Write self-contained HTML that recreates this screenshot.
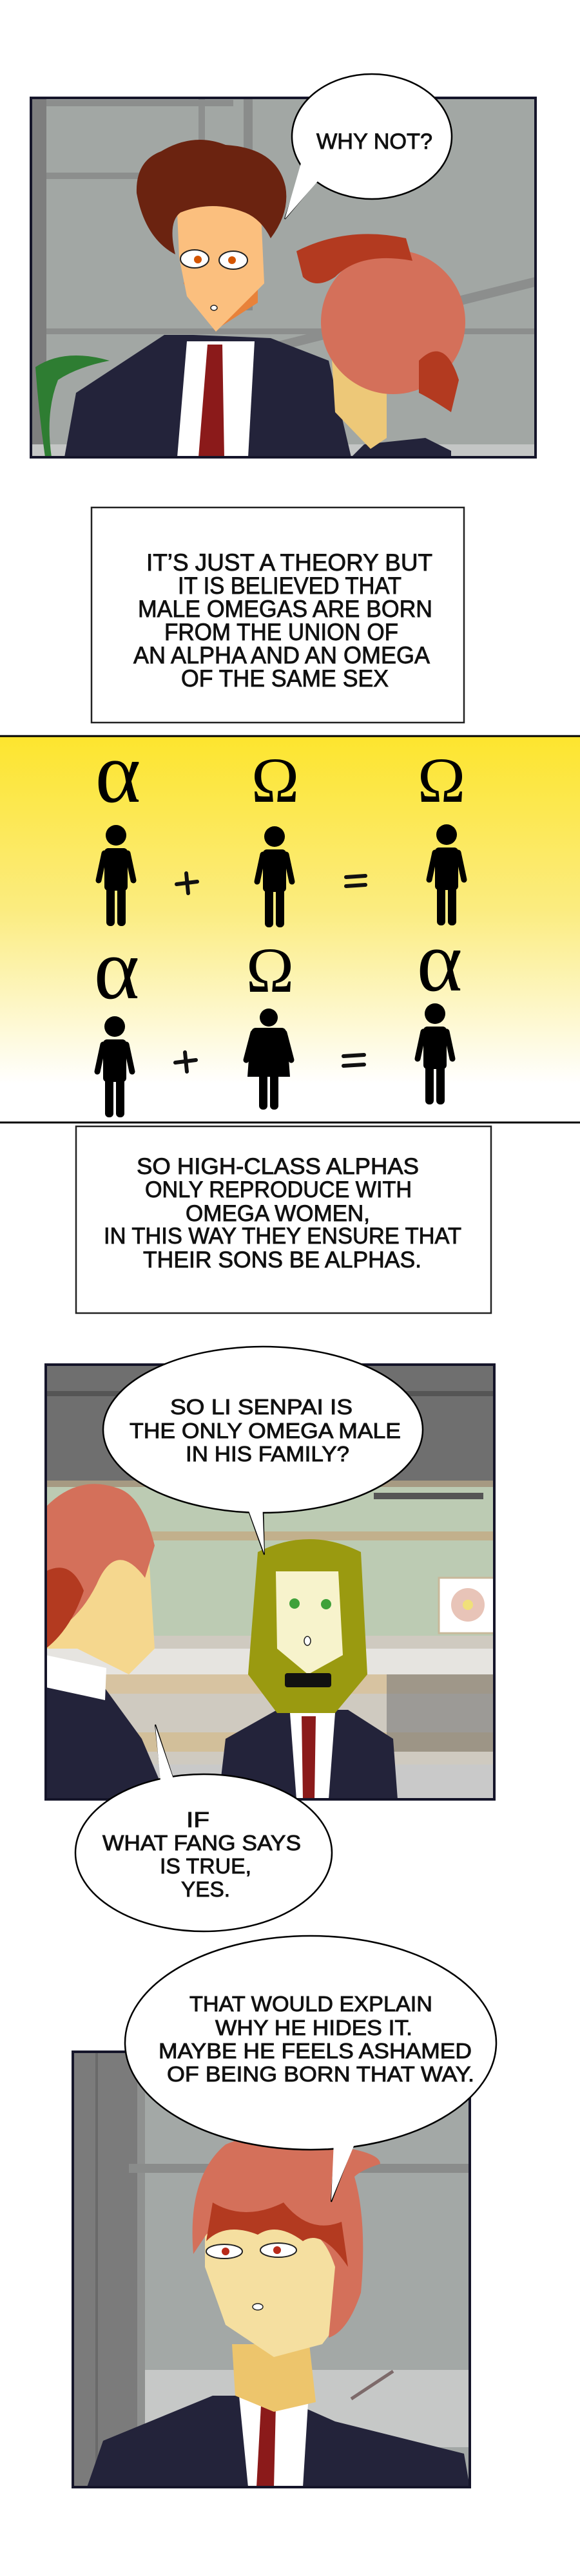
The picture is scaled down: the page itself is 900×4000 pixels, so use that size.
<!DOCTYPE html>
<html><head><meta charset="utf-8"><style>
html,body{margin:0;padding:0;background:#fff}
svg{display:block}
.t{font-family:"Liberation Sans",sans-serif;font-weight:normal;fill:#111;stroke:#111;stroke-width:0.9}
</style></head><body>
<svg width="900" height="4000" viewBox="0 0 900 4000" xmlns="http://www.w3.org/2000/svg">
<defs>
<linearGradient id="yg" x1="0" y1="0" x2="0" y2="1">
<stop offset="0" stop-color="#fde52e"/><stop offset="0.45" stop-color="#fbec80"/><stop offset="0.9" stop-color="#ffffff"/><stop offset="1" stop-color="#fff"/>
</linearGradient>
<g id="man">
<circle cx="0" cy="16" r="16"/>
<rect x="-18" y="36" width="36" height="66" rx="6"/>
<line x1="-18" y1="44" x2="-27" y2="86" stroke="#000" stroke-width="9" stroke-linecap="round"/>
<line x1="18" y1="44" x2="27" y2="86" stroke="#000" stroke-width="9" stroke-linecap="round"/>
<rect x="-15" y="92" width="13" height="65" rx="6"/>
<rect x="2" y="92" width="13" height="65" rx="6"/>
</g>
<g id="woman">
<circle cx="0" cy="14" r="14"/>
<path d="M-20,30 H20 Q26,30 28,38 L33,106 H-33 L-28,38 Q-26,30 -20,30Z"/>
<line x1="-24" y1="38" x2="-35" y2="80" stroke="#000" stroke-width="9" stroke-linecap="round"/>
<line x1="24" y1="38" x2="35" y2="80" stroke="#000" stroke-width="9" stroke-linecap="round"/>
<rect x="-15" y="100" width="13" height="57" rx="6"/>
<rect x="2" y="100" width="13" height="57" rx="6"/>
</g>
<clipPath id="c1"><rect x="48" y="152" width="783" height="558"/></clipPath>
<clipPath id="c2"><rect x="71" y="2119" width="696" height="675"/></clipPath>
<clipPath id="c3"><rect x="113" y="3186" width="616" height="676"/></clipPath>
</defs>

<!-- PANEL 1 -->
<g clip-path="url(#c1)">
<rect x="48" y="152" width="783" height="558" fill="#a2a7a4"/>
<rect x="48" y="152" width="24" height="558" fill="#7e7e7e"/>
<rect x="308" y="152" width="10" height="200" fill="#8d8f8e"/>
<rect x="378" y="152" width="14" height="330" fill="#8a8c8b"/>
<rect x="72" y="155" width="290" height="10" fill="#8c8e8d"/>
<rect x="72" y="268" width="280" height="10" fill="#8c8e8d"/>
<rect x="72" y="510" width="760" height="9" fill="#8c8e8d"/>
<polygon points="392,540 831,430 831,445 392,555" fill="#8c8e8d"/>
<rect x="48" y="690" width="783" height="20" fill="#c4c6c5"/>
<path d="M55,570 Q100,540 170,560 Q120,570 90,590 Q70,640 80,710 L70,710 Q60,640 55,570Z" fill="#2e7d32"/>
<path d="M100,710 L118,610 L255,520 L300,520 L420,525 L510,560 L545,710Z" fill="#23233a"/>
<path d="M290,530 L395,530 L385,710 L275,710Z" fill="#fff"/>
<path d="M322,535 L345,535 L348,710 L308,710Z" fill="#8b1a1a"/>
<path d="M285,440 L335,512 L400,470 L400,420 L290,420Z" fill="#e8823a"/>
<path d="M275,330 Q330,310 405,330 L410,440 L335,515 L290,460 L278,400Z" fill="#fbbf7e"/>
<ellipse cx="302" cy="402" rx="22" ry="14" fill="#fff" stroke="#222" stroke-width="2"/>
<ellipse cx="362" cy="404" rx="22" ry="14" fill="#fff" stroke="#222" stroke-width="2"/>
<circle cx="307" cy="403" r="6" fill="#d45500"/><circle cx="360" cy="404" r="6" fill="#d45500"/>
<ellipse cx="332" cy="478" rx="5" ry="4" fill="#fff" stroke="#222" stroke-width="1.5"/>
<path d="M212,300 Q210,250 250,235 Q300,205 350,225 Q430,230 443,290 Q450,330 420,370 Q405,340 380,330 Q330,310 280,330 Q260,345 272,395 Q225,370 212,300Z" fill="#6b2310"/>
<path d="M545,710 L565,690 L660,680 L700,700 L700,710Z" fill="#23233a"/>
<path d="M511,493 L520,640 L575,697 L600,680 L600,500Z" fill="#edc878"/>
<circle cx="610" cy="500" r="112" fill="#d4705a"/>
<path d="M460,390 Q540,350 630,370 L640,405 Q560,390 520,430 Q490,450 470,430Z" fill="#b33a20"/>
<path d="M650,560 Q690,520 712,590 L700,640 Q670,620 650,610Z" fill="#b33a20"/>
</g>
<rect x="48" y="152" width="783" height="558" fill="none" stroke="#15152a" stroke-width="4"/>
<path d="M470,255 L442,340 L505,265Z" fill="#fff" stroke="#000" stroke-width="2"/>
<ellipse cx="577" cy="212" rx="124" ry="97" fill="#fff" stroke="#000" stroke-width="2.5"/>
<path d="M468,250 L442,340 L510,262" fill="#fff"/>
<text class="t" x="491" y="231" font-size="34" textLength="180" lengthAdjust="spacingAndGlyphs">WHY NOT?</text>

<rect x="142" y="788" width="578" height="334" fill="#fff" stroke="#222" stroke-width="2.5"/>
<g class="t" font-size="37">
<text x="227" y="886" textLength="444" lengthAdjust="spacingAndGlyphs">IT’S JUST A THEORY BUT</text>
<text x="276" y="922" textLength="347" lengthAdjust="spacingAndGlyphs">IT IS BELIEVED THAT</text>
<text x="214" y="958" textLength="457" lengthAdjust="spacingAndGlyphs">MALE OMEGAS ARE BORN</text>
<text x="255" y="994" textLength="363" lengthAdjust="spacingAndGlyphs">FROM THE UNION OF</text>
<text x="207" y="1030" textLength="460" lengthAdjust="spacingAndGlyphs">AN ALPHA AND AN OMEGA</text>
<text x="281" y="1066" textLength="322" lengthAdjust="spacingAndGlyphs">OF THE SAME SEX</text>
</g>

<rect x="0" y="1143" width="900" height="600" fill="url(#yg)"/>
<line x1="0" y1="1143" x2="900" y2="1143" stroke="#000" stroke-width="3"/>
<line x1="0" y1="1743" x2="900" y2="1743" stroke="#000" stroke-width="3"/>
<g font-family="Liberation Serif, serif" fill="#000">
<text x="183" y="1245" font-size="135" text-anchor="middle">α</text>
<text x="427" y="1245" font-size="100" text-anchor="middle">Ω</text>
<text x="685" y="1245" font-size="100" text-anchor="middle">Ω</text>
<text x="181" y="1550" font-size="135" text-anchor="middle">α</text>
<text x="419" y="1540" font-size="100" text-anchor="middle">Ω</text>
<text x="682" y="1538" font-size="135" text-anchor="middle">α</text>
</g>
<use href="#man" x="180" y="1281"/>
<use href="#man" x="426" y="1283"/>
<use href="#man" x="693" y="1280"/>
<use href="#man" x="178" y="1578"/>
<use href="#woman" x="417" y="1566"/>
<use href="#man" x="675" y="1558"/>
<g stroke="#111" stroke-width="6" stroke-linecap="round" fill="none">
<path d="M274,1373 L306,1369 M289,1356 L292,1387"/>
<path d="M537,1362 L567,1360 M537,1376 L567,1374"/>
<path d="M272,1650 L304,1646 M287,1634 L290,1664"/>
<path d="M533,1640 L565,1638 M533,1655 L565,1653"/>
</g>

<rect x="118" y="1749" width="644" height="290" fill="#fff" stroke="#222" stroke-width="2.5"/>
<g class="t" font-size="35">
<text x="212" y="1823" textLength="438" lengthAdjust="spacingAndGlyphs">SO HIGH-CLASS ALPHAS</text>
<text x="225" y="1859" textLength="414" lengthAdjust="spacingAndGlyphs">ONLY REPRODUCE WITH</text>
<text x="288" y="1896" textLength="286" lengthAdjust="spacingAndGlyphs">OMEGA WOMEN,</text>
<text x="161" y="1931" textLength="555" lengthAdjust="spacingAndGlyphs">IN THIS WAY THEY ENSURE THAT</text>
<text x="222" y="1968" textLength="432" lengthAdjust="spacingAndGlyphs">THEIR SONS BE ALPHAS.</text>
</g>

<g clip-path="url(#c2)">
<rect x="71" y="2119" width="696" height="675" fill="#bccbb3"/>
<rect x="71" y="2119" width="696" height="180" fill="#6f6f6f"/>
<rect x="71" y="2160" width="696" height="8" fill="#555"/>
<rect x="580" y="2318" width="170" height="10" fill="#555"/>
<rect x="71" y="2299" width="696" height="10" fill="#a69a82"/>
<rect x="71" y="2378" width="696" height="14" fill="#c2b08c"/>
<rect x="681" y="2450" width="90" height="86" fill="#fff" stroke="#c8b89a" stroke-width="3"/>
<circle cx="726" cy="2492" r="26" fill="#e8c4b8"/><circle cx="726" cy="2492" r="8" fill="#f0e07a"/>
<rect x="71" y="2540" width="696" height="254" fill="#cfcac0"/>
<rect x="71" y="2560" width="696" height="40" fill="#e6e4e0"/>
<rect x="71" y="2600" width="696" height="30" fill="#d7c3a1"/>
<rect x="71" y="2690" width="696" height="30" fill="#d2bf9a"/>
<rect x="600" y="2600" width="167" height="120" fill="#7a7a7a" opacity="0.6"/>
<rect x="71" y="2740" width="696" height="54" fill="#c9c9c9"/>
<path d="M71,2580 L140,2590 L220,2700 L260,2794 L71,2794Z" fill="#23233a"/>
<path d="M71,2570 L165,2590 L163,2640 L71,2620Z" fill="#fff"/>
<path d="M71,2380 L230,2400 L240,2560 L200,2600 L120,2560 L71,2560Z" fill="#f5d78e"/>
<path d="M71,2340 Q120,2290 180,2310 Q220,2320 240,2400 L225,2450 Q180,2390 150,2460 Q120,2520 71,2540Z" fill="#d4705a"/>
<path d="M71,2440 Q110,2420 130,2470 Q110,2530 71,2560Z" fill="#b33a20"/>
<path d="M339,2794 L350,2700 L430,2655 L540,2655 L610,2700 L617,2794Z" fill="#23233a"/>
<path d="M450,2660 L520,2660 L510,2794 L460,2794Z" fill="#fff"/>
<path d="M468,2665 L490,2665 L488,2794 L470,2794Z" fill="#8b1a1a"/>
<path d="M400,2410 Q480,2370 560,2410 L570,2600 L520,2660 L430,2660 L385,2600Z" fill="#9a9a10"/>
<path d="M428,2440 L525,2440 L532,2570 L478,2600 L430,2560Z" fill="#f7f3cc"/>
<rect x="442" y="2598" width="72" height="22" rx="4" fill="#111"/>
<circle cx="457" cy="2490" r="8" fill="#3fa13a"/><circle cx="506" cy="2491" r="8" fill="#3fa13a"/>
<ellipse cx="477" cy="2548" rx="5" ry="7" fill="#fff" stroke="#222" stroke-width="1.5"/>
</g>
<rect x="71" y="2119" width="696" height="675" fill="none" stroke="#15152a" stroke-width="4"/>
<path d="M380,2330 L410,2414 L408,2330Z" fill="#fff" stroke="#000" stroke-width="2"/>
<ellipse cx="408" cy="2220" rx="248" ry="129" fill="#fff" stroke="#000" stroke-width="2.5"/>
<path d="M382,2335 L410,2412 L407,2330" fill="#fff"/>
<path d="M250,2760 L241,2678 L268,2760Z" fill="#fff" stroke="#000" stroke-width="2"/>
<ellipse cx="316" cy="2877" rx="199" ry="122" fill="#fff" stroke="#000" stroke-width="2.5"/>
<path d="M249,2765 L241,2680 L270,2765" fill="#fff"/>
<g class="t" font-size="33">
<text x="264" y="2196" textLength="283" lengthAdjust="spacingAndGlyphs">SO LI SENPAI IS</text>
<text x="201" y="2233" textLength="421" lengthAdjust="spacingAndGlyphs">THE ONLY OMEGA MALE</text>
<text x="288" y="2269" textLength="254" lengthAdjust="spacingAndGlyphs">IN HIS FAMILY?</text>
<text x="289" y="2837" textLength="36" lengthAdjust="spacingAndGlyphs">IF</text>
<text x="159" y="2873" textLength="308" lengthAdjust="spacingAndGlyphs">WHAT FANG SAYS</text>
<text x="248" y="2909" textLength="142" lengthAdjust="spacingAndGlyphs">IS TRUE,</text>
<text x="281" y="2945" textLength="76" lengthAdjust="spacingAndGlyphs">YES.</text>
</g>

<g clip-path="url(#c3)">
<rect x="113" y="3186" width="616" height="676" fill="#a3a8a6"/>
<rect x="113" y="3186" width="100" height="676" fill="#7b7b7b"/>
<rect x="148" y="3186" width="4" height="676" fill="#6a6a6a"/>
<rect x="213" y="3186" width="12" height="676" fill="#8f9190"/>
<rect x="200" y="3360" width="529" height="14" fill="#8a8c8b"/>
<rect x="225" y="3680" width="504" height="120" fill="#c6c8c7"/>
<line x1="545" y1="3725" x2="610" y2="3682" stroke="#7d6a6a" stroke-width="5"/>
<path d="M135,3862 L160,3790 L330,3720 L430,3720 L520,3760 L720,3810 L729,3862Z" fill="#23233a"/>
<path d="M370,3710 L480,3700 L470,3862 L385,3862Z" fill="#fff"/>
<path d="M405,3735 L428,3735 L425,3862 L398,3862Z" fill="#8b1a1a"/>
<path d="M360,3640 L480,3640 L490,3730 L425,3745 L365,3720Z" fill="#edc56c"/>
<path d="M318,3430 L540,3420 L545,3580 L500,3640 L425,3660 L350,3610 L318,3520Z" fill="#f5dfa0"/>
<ellipse cx="348" cy="3496" rx="28" ry="11" fill="#fff" stroke="#222" stroke-width="2"/>
<ellipse cx="432" cy="3494" rx="28" ry="11" fill="#fff" stroke="#222" stroke-width="2"/>
<circle cx="350" cy="3496" r="6" fill="#b82a1a"/><circle cx="430" cy="3494" r="6" fill="#b82a1a"/>
<ellipse cx="400" cy="3582" rx="8" ry="5" fill="#fff" stroke="#222" stroke-width="1.5"/>
<path d="M300,3500 Q290,3380 350,3330 Q420,3300 500,3330 Q590,3340 590,3360 Q560,3370 550,3380 Q570,3450 560,3560 Q540,3620 510,3630 L520,3520 Q500,3460 470,3470 Q440,3440 400,3460 Q350,3440 320,3470Z" fill="#d4705a"/>
<path d="M330,3420 Q380,3450 440,3420 Q480,3470 530,3450 L540,3520 Q500,3460 470,3480 Q430,3450 400,3470 Q350,3450 320,3480Z" fill="#b33a20"/>
</g>
<rect x="113" y="3186" width="616" height="676" fill="none" stroke="#15152a" stroke-width="4"/>
<path d="M520,3330 L514,3419 L548,3330Z" fill="#fff" stroke="#000" stroke-width="2"/>
<ellipse cx="482" cy="3172" rx="288" ry="166" fill="#fff" stroke="#000" stroke-width="2.5"/>
<path d="M518,3325 L514,3417 L552,3325" fill="#fff"/>
<g class="t" font-size="33">
<text x="294" y="3123" textLength="377" lengthAdjust="spacingAndGlyphs">THAT WOULD EXPLAIN</text>
<text x="334" y="3160" textLength="306" lengthAdjust="spacingAndGlyphs">WHY HE HIDES IT.</text>
<text x="246" y="3196" textLength="486" lengthAdjust="spacingAndGlyphs">MAYBE HE FEELS ASHAMED</text>
<text x="259" y="3232" textLength="477" lengthAdjust="spacingAndGlyphs">OF BEING BORN THAT WAY.</text>
</g>
</svg>
</body></html>
